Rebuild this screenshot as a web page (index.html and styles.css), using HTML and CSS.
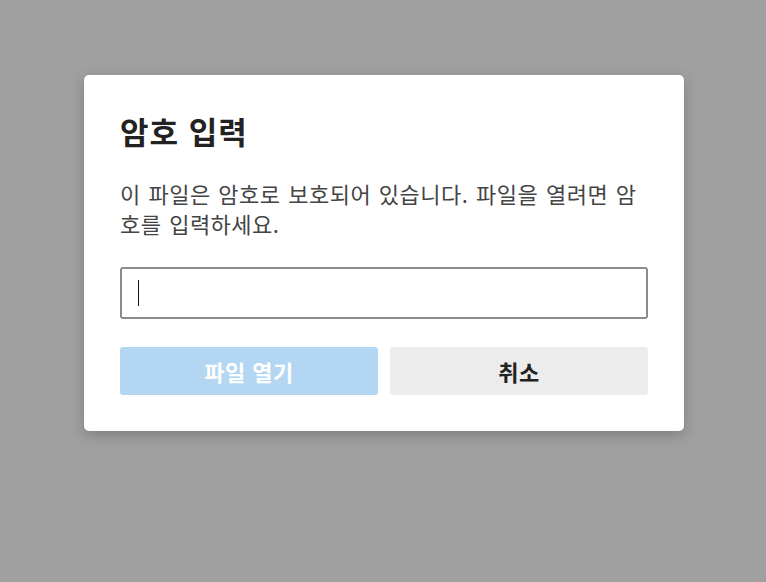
FILE: index.html
```html
<!DOCTYPE html>
<html lang="ko">
<head>
<meta charset="utf-8">
<title>암호 입력</title>
<link rel="stylesheet" href="styles.css">
</head>
<body>
<div class="overlay">
  <div class="dialog" role="dialog" aria-labelledby="dlg-title">
    <h1 class="title" id="dlg-title">암호 입력</h1>
    <p class="message">이 파일은 암호로 보호되어 있습니다. 파일을 열려면 암호를 입력하세요.</p>
    <div class="field"><span class="caret"></span></div>
    <div class="actions">
      <button class="btn btn-primary" disabled>파일 열기</button>
      <button class="btn btn-secondary">취소</button>
    </div>
  </div>
</div>
</body>
</html>
```
FILE: styles.css
```css
html, body {
  margin: 0;
  padding: 0;
  height: 100%;
}
body {
  background: #a0a0a0;
  font-family: "Noto Sans CJK KR", "Noto Sans", sans-serif;
}
.overlay {
  padding-top: 75px;
  padding-left: 84px;
}
.dialog {
  width: 600px;
  box-sizing: border-box;
  padding: 36px;
  background: #ffffff;
  border-radius: 5px;
  box-shadow: 0 4px 14px rgba(0, 0, 0, 0.22);
}
.title {
  margin: 0;
  font-size: 31px;
  font-weight: 700;
  letter-spacing: 1px;
  line-height: 40px;
  color: #222222;
}
.message {
  margin: 27px 0 0;
  font-size: 22px;
  line-height: 30px;
  letter-spacing: 0.5px;
  word-spacing: 1px;
  color: #444444;
}
.field {
  margin-top: 29px;
  height: 52px;
  box-sizing: border-box;
  border: 2px solid #8c8c8c;
  border-radius: 3px;
  display: flex;
  align-items: center;
  padding-left: 16px;
}
.caret {
  width: 1px;
  height: 26px;
  background: #111111;
}
.actions {
  margin-top: 28px;
  display: flex;
  gap: 12px;
}
.btn {
  flex: 1;
  height: 48px;
  border: none;
  border-radius: 3px;
  font-family: inherit;
  font-size: 22px;
  font-weight: 700;
  letter-spacing: 0.5px;
  padding: 0;
}
.btn-primary {
  background: #b3d6f2;
  color: #ffffff;
}
.btn-secondary {
  background: #ececec;
  color: #222222;
}
```
